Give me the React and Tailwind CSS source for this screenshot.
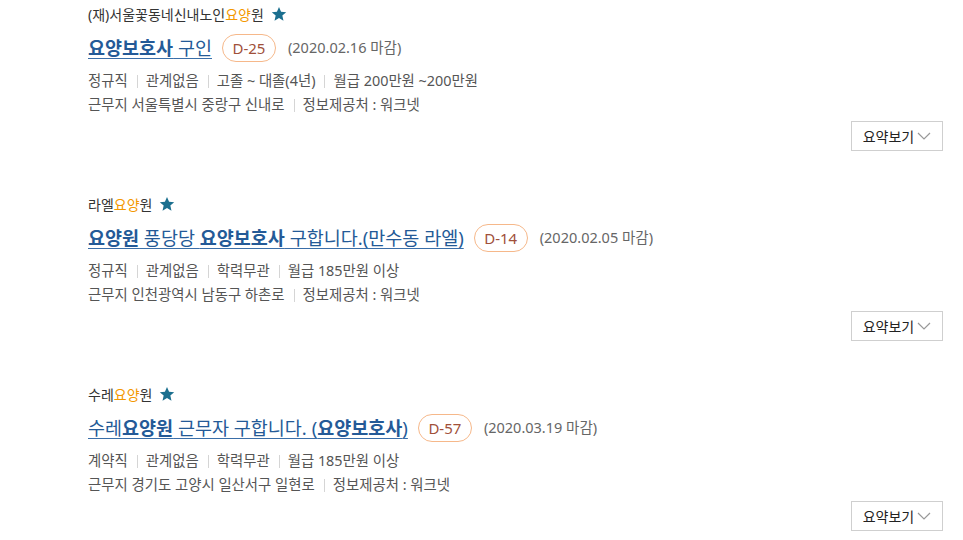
import React from 'react'

const jobs = [
  {
    company: [['(재)서울꽃동네신내노인', false], ['요양', true], ['원', false]],
    title: [['요양보호사', true], [' 구인', false]],
    dday: 'D-25',
    due: '(2020.02.16 마감)',
    info: ['정규직', '관계없음', '고졸 ~ 대졸(4년)', '월급 200만원 ~200만원'],
    place: '근무지 서울특별시 중랑구 신내로',
  },
  {
    company: [['라엘', false], ['요양', true], ['원', false]],
    title: [['요양원', true], [' 풍당당 ', false], ['요양보호사', true], [' 구합니다.(만수동 라엘)', false]],
    dday: 'D-14',
    due: '(2020.02.05 마감)',
    info: ['정규직', '관계없음', '학력무관', '월급 185만원 이상'],
    place: '근무지 인천광역시 남동구 하촌로',
  },
  {
    company: [['수레', false], ['요양', true], ['원', false]],
    title: [['수레', false], ['요양원', true], [' 근무자 구합니다. (', false], ['요양보호사', true], [')', false]],
    dday: 'D-57',
    due: '(2020.03.19 마감)',
    info: ['계약직', '관계없음', '학력무관', '월급 185만원 이상'],
    place: '근무지 경기도 고양시 일산서구 일현로',
  },
]

function Star() {
  return (
    <svg width="16" height="16" viewBox="0 0 24 24" className="ml-[7px]">
      <path d="M12 1.5l3.1 7.1 7.7.7-5.8 5.1 1.7 7.6L12 18l-6.7 4 1.7-7.6-5.8-5.1 7.7-.7z" fill="#1b6f8f" />
    </svg>
  )
}

function Bar() {
  return <span className="ml-[9px] mr-[8px] inline-block h-[13px] w-px bg-[#d5d5d5]" />
}

function JobItem({ job }) {
  return (
    <div className="pb-[43px]">
      <div className="flex h-[20px] items-center text-[14px] text-[#333]">
        {job.company.map(([t, hl], i) => (
          <span key={i} className={hl ? 'text-[#f39800]' : ''}>{t}</span>
        ))}
        <Star />
      </div>
      <div className="mt-[10px] flex h-[28px] items-center">
        <a href="#" className="whitespace-pre text-[18.5px] text-[#245a97] underline decoration-[#3a6ea8] decoration-1 underline-offset-[3px]">
          {job.title.map(([t, b], i) => (
            <span key={i} className={b ? 'font-bold' : ''}>{t}</span>
          ))}
        </a>
        <span className="ml-[10px] flex h-[28px] w-[54px] items-center justify-center rounded-full border border-[#f6b88a] text-[15px] text-[#a0503a]">
          {job.dday}
        </span>
        <span className="ml-[12px] text-[14.5px] text-[#666]">{job.due}</span>
      </div>
      <div className="mt-[7px] flex h-[24px] items-center text-[14.4px] text-[#555]">
        {job.info.map((t, i) => (
          <React.Fragment key={i}>
            {i > 0 && <Bar />}
            <span>{t}</span>
          </React.Fragment>
        ))}
      </div>
      <div className="flex h-[24px] items-center text-[14.4px] text-[#555]">
        <span>{job.place}</span>
        <Bar />
        <span>정보제공처 : 워크넷</span>
      </div>
      <div className="mt-[4px] flex justify-end">
        <button className="flex h-[30px] w-[92px] items-center justify-center gap-[3px] border border-[#cfcfcf] bg-white text-[14px] text-[#222]">
          요약보기
          <svg width="14" height="8" viewBox="0 0 14 8">
            <path d="M1 1l6 6l6-6" fill="none" stroke="#999" strokeWidth="1.2" />
          </svg>
        </button>
      </div>
    </div>
  )
}

export default function App() {
  return (
    <div className="h-[540px] overflow-hidden bg-white pl-[88px] pr-[20px] pt-[4px] font-['Noto_Sans','Noto_Sans_CJK_KR',sans-serif]">
      {jobs.map((j, i) => (
        <JobItem key={i} job={j} />
      ))}
    </div>
  )
}
